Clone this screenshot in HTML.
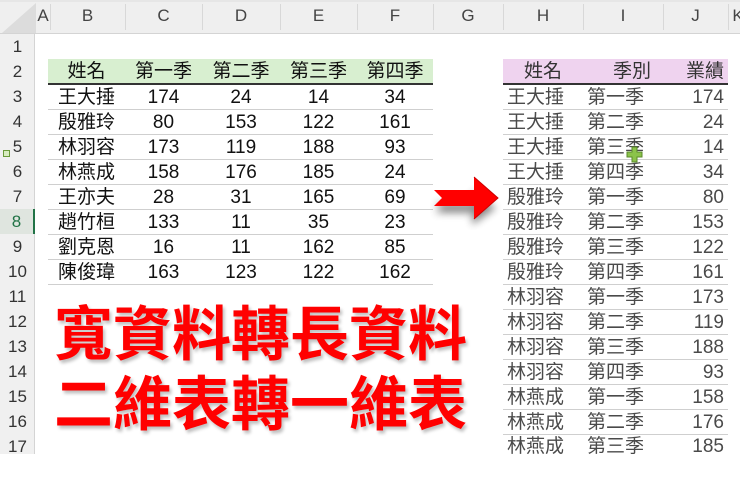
<!DOCTYPE html>
<html><head><meta charset="utf-8"><style>
*{margin:0;padding:0;box-sizing:border-box}
body{width:740px;height:480px;background:#fff;position:relative;overflow:hidden;font-family:"Liberation Sans","Noto Sans CJK TC",sans-serif}
.colbar{position:absolute;left:0;top:0;width:740px;height:34px;background:#efefef;border-bottom:1px solid #d4d4d4;border-top:2px solid #e6e6e6}
.ch{position:absolute;top:6px;font-size:17px;color:#444;text-align:center}
.rowbar{position:absolute;left:0;top:34px;width:35px;height:420px;background:#f0f0f0;border-right:1px solid #d4d4d4}
.rh{position:absolute;left:0;width:35px;text-align:center;font-size:17px;color:#333;line-height:25px}
.sep{position:absolute;top:4px;width:1px;height:26px;background:#d8d8d8}
table{position:absolute;border-collapse:collapse;font-family:"Liberation Sans","Noto Sans CJK TC",sans-serif}
td{height:25px;font-size:19px;border-bottom:1px solid #cfcfcf;padding:2px 0 0 0;line-height:22px}
.L td{color:#111;text-align:center}
.L tr:first-child td{background:#d8efd0;border-bottom:2px solid #333}
.R td{color:#4a4a4a}
.R tr:first-child td{background:#efd3ef;border-bottom:2px solid #333;color:#333}
.big{position:absolute;left:54px;font-size:59px;font-weight:bold;color:#f00;font-family:"Noto Sans CJK TC",sans-serif;line-height:60px;text-shadow:2px 3px 3px rgba(0,0,0,.25);white-space:nowrap}
</style></head><body>
<div class="colbar"></div>
<div class="ch" style="left:36px;width:14px">A</div>
<div class="ch" style="left:50px;width:75px">B</div>
<div class="ch" style="left:125px;width:77px">C</div>
<div class="ch" style="left:202px;width:78px">D</div>
<div class="ch" style="left:280px;width:77px">E</div>
<div class="ch" style="left:357px;width:76px">F</div>
<div class="ch" style="left:433px;width:70px">G</div>
<div class="ch" style="left:503px;width:80px">H</div>
<div class="ch" style="left:583px;width:80px">I</div>
<div class="ch" style="left:663px;width:65px">J</div>
<div class="ch" style="left:731px;width:14px">K</div>
<div class="sep" style="left:50px"></div><div class="sep" style="left:125px"></div><div class="sep" style="left:202px"></div><div class="sep" style="left:280px"></div><div class="sep" style="left:357px"></div><div class="sep" style="left:433px"></div><div class="sep" style="left:503px"></div><div class="sep" style="left:583px"></div><div class="sep" style="left:663px"></div><div class="sep" style="left:728px"></div>
<div style="position:absolute;width:0;height:0;border-left:34px solid transparent;border-bottom:30px solid #dcdcdc;left:2px;top:3px"></div>
<div class="rowbar"></div>
<div class="rh" style="top:34px">1</div><div class="rh" style="top:59px">2</div><div class="rh" style="top:84px">3</div><div class="rh" style="top:109px">4</div><div class="rh" style="top:134px">5</div><div class="rh" style="top:159px">6</div><div class="rh" style="top:184px">7</div>
<div class="rh" style="top:209px;background:#dfe5df;color:#217346;border-right:2px solid #217346">8</div>
<div class="rh" style="top:234px">9</div><div class="rh" style="top:259px">10</div><div class="rh" style="top:284px">11</div><div class="rh" style="top:309px">12</div><div class="rh" style="top:334px">13</div><div class="rh" style="top:359px">14</div><div class="rh" style="top:384px">15</div><div class="rh" style="top:409px">16</div><div class="rh" style="top:434px;height:20px;overflow:hidden">17</div>
<div style="position:absolute;left:3px;top:150px;width:7px;height:7px;border:1px solid #6a9a3a;background:#d8ecc0"></div>

<table class="L" style="left:48px;top:59px;width:385px">
<colgroup><col style="width:77px"><col style="width:77px"><col style="width:78px"><col style="width:77px"><col style="width:76px"></colgroup>
<tr><td>姓名</td><td>第一季</td><td>第二季</td><td>第三季</td><td>第四季</td></tr>
<tr><td>王大捶</td><td>174</td><td>24</td><td>14</td><td>34</td></tr>
<tr><td>殷雅玲</td><td>80</td><td>153</td><td>122</td><td>161</td></tr>
<tr><td>林羽容</td><td>173</td><td>119</td><td>188</td><td>93</td></tr>
<tr><td>林燕成</td><td>158</td><td>176</td><td>185</td><td>24</td></tr>
<tr><td>王亦夫</td><td>28</td><td>31</td><td>165</td><td>69</td></tr>
<tr><td>趙竹桓</td><td>133</td><td>11</td><td>35</td><td>23</td></tr>
<tr><td>劉克恩</td><td>16</td><td>11</td><td>162</td><td>85</td></tr>
<tr><td>陳俊瑋</td><td>163</td><td>123</td><td>122</td><td>162</td></tr>
</table>

<div style="position:absolute;left:503px;top:434px;width:225px;height:20px;overflow:hidden">
<table class="R" style="position:static;width:225px"><colgroup><col style="width:80px"><col style="width:80px"><col style="width:65px"></colgroup>
<tr><td style="padding-left:4px;background:#fff;border-bottom:1px solid #cfcfcf;color:#4a4a4a">林燕成</td><td style="padding-left:4px;background:#fff;border-bottom:1px solid #cfcfcf;color:#4a4a4a">第三季</td><td style="text-align:right;padding-right:4px;background:#fff;border-bottom:1px solid #cfcfcf;color:#4a4a4a">185</td></tr></table></div>

<table class="R" style="left:503px;top:59px;width:225px">
<colgroup><col style="width:80px"><col style="width:80px"><col style="width:65px"></colgroup>
<tr><td style="text-align:center">姓名</td><td style="text-align:right;padding-right:12px">季別</td><td style="text-align:right;padding-right:4px">業績</td></tr>
<tr><td style="padding-left:4px">王大捶</td><td style="padding-left:4px">第一季</td><td style="text-align:right;padding-right:4px">174</td></tr>
<tr><td style="padding-left:4px">王大捶</td><td style="padding-left:4px">第二季</td><td style="text-align:right;padding-right:4px">24</td></tr>
<tr><td style="padding-left:4px">王大捶</td><td style="padding-left:4px">第三季</td><td style="text-align:right;padding-right:4px">14</td></tr>
<tr><td style="padding-left:4px">王大捶</td><td style="padding-left:4px">第四季</td><td style="text-align:right;padding-right:4px">34</td></tr>
<tr><td style="padding-left:4px">殷雅玲</td><td style="padding-left:4px">第一季</td><td style="text-align:right;padding-right:4px">80</td></tr>
<tr><td style="padding-left:4px">殷雅玲</td><td style="padding-left:4px">第二季</td><td style="text-align:right;padding-right:4px">153</td></tr>
<tr><td style="padding-left:4px">殷雅玲</td><td style="padding-left:4px">第三季</td><td style="text-align:right;padding-right:4px">122</td></tr>
<tr><td style="padding-left:4px">殷雅玲</td><td style="padding-left:4px">第四季</td><td style="text-align:right;padding-right:4px">161</td></tr>
<tr><td style="padding-left:4px">林羽容</td><td style="padding-left:4px">第一季</td><td style="text-align:right;padding-right:4px">173</td></tr>
<tr><td style="padding-left:4px">林羽容</td><td style="padding-left:4px">第二季</td><td style="text-align:right;padding-right:4px">119</td></tr>
<tr><td style="padding-left:4px">林羽容</td><td style="padding-left:4px">第三季</td><td style="text-align:right;padding-right:4px">188</td></tr>
<tr><td style="padding-left:4px">林羽容</td><td style="padding-left:4px">第四季</td><td style="text-align:right;padding-right:4px">93</td></tr>
<tr><td style="padding-left:4px">林燕成</td><td style="padding-left:4px">第一季</td><td style="text-align:right;padding-right:4px">158</td></tr>
<tr><td style="padding-left:4px">林燕成</td><td style="padding-left:4px">第二季</td><td style="text-align:right;padding-right:4px">176</td></tr>
</table>

<svg style="position:absolute;left:625px;top:145px" width="20" height="20" viewBox="0 0 20 20"><path d="M7 2h5v5h5v5h-5v5H7v-5H2V7h5z" fill="#8bc34a" stroke="#5a8a2a" stroke-width="1"/></svg>

<svg style="position:absolute;left:430px;top:175px" width="80" height="55" viewBox="0 0 80 55">
<defs><filter id="s" x="-30%" y="-30%" width="160%" height="180%"><feGaussianBlur stdDeviation="4"/></filter></defs>
<path d="M6 20h38v-12l24 17-24 17v-12H6l8-5z" fill="#000" opacity=".45" filter="url(#s)" transform="translate(-2,8)"/>
<path d="M4 15h40v-13l24 21-24 21v-13H4l8-8z" fill="#f00"/>
<path d="M44 2l24 21-24 21" fill="none" stroke="#c00" stroke-width="1"/>
</svg>

<div class="big" style="top:300px">寬資料轉長資料</div>
<div class="big" style="top:370px">二維表轉一維表</div>
<div style="position:absolute;left:0;top:454px;width:740px;height:26px;background:#fff"></div>
</body></html>
